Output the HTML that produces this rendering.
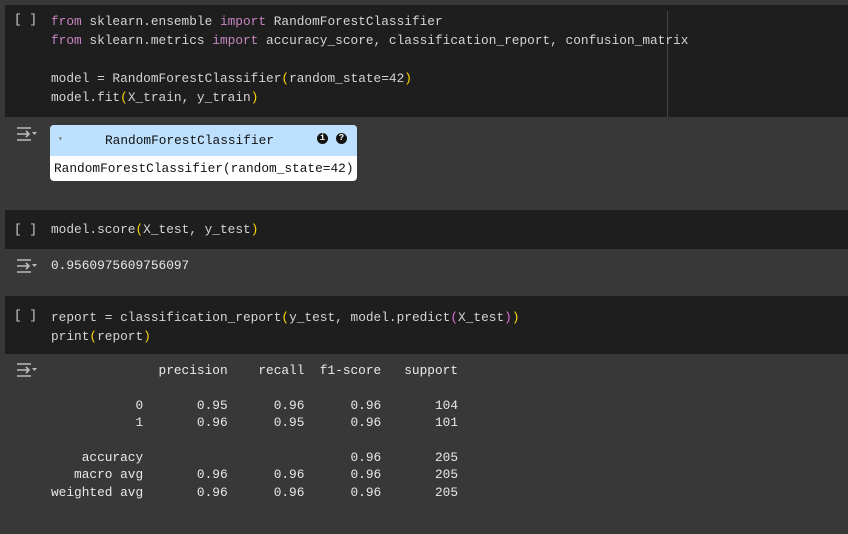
<!DOCTYPE html>
<html><head><meta charset="utf-8"><style>
body{margin:0;width:848px;height:534px;background:#383838;overflow:hidden;font-family:"Liberation Mono",monospace;font-size:12.8px;color:#d4d4d4;position:relative}
.cell{position:absolute;left:5px;right:0;background:#1e1e1e}
.br{position:absolute;left:14px;color:#cfcfcf}
pre{margin:0;font:inherit;white-space:pre;position:absolute;left:51px}
.k{color:#c586c0}.p{color:#ffd700}.q{color:#da70d6}
.ic{position:absolute;left:16px;width:22px;height:16px}
.out{color:#e8e8e8}
</style></head><body>
<div class="cell" style="top:5px;height:112px">
<div style="position:absolute;left:662px;top:6px;width:1px;height:106px;background:#444"></div>
</div>
<span class="br" style="top:12px">[ ]</span>
<pre style="top:12px;line-height:19px"><span class="k">from</span> sklearn.ensemble <span class="k">import</span> RandomForestClassifier
<span class="k">from</span> sklearn.metrics <span class="k">import</span> accuracy_score, classification_report, confusion_matrix

model = RandomForestClassifier<span class="p">(</span>random_state=42<span class="p">)</span>
model.fit<span class="p">(</span>X_train, y_train<span class="p">)</span></pre>

<svg class="ic" style="top:126px" viewBox="0 0 22 16"><g stroke="#bbb" stroke-width="1.6" fill="none"><path d="M1 2h14M1 14h14M1 8h12M10 5l3 3-3 3"/></g><path d="M16 6h5l-2.5 3z" fill="#bbb"/></svg>
<div style="position:absolute;left:50px;top:125px;width:307px;height:56px;background:#fff;border-radius:4px;overflow:hidden">
<div style="height:31px;background:#bde0fe;position:relative;color:#111">
<span style="position:absolute;left:8px;top:9px;font-size:8px;color:#777">▾</span>
<span style="position:absolute;left:55px;top:8px">RandomForestClassifier</span>
<span style="position:absolute;left:267px;top:8px;width:11px;height:11px;border-radius:50%;background:#111;color:#fff;font-size:9px;text-align:center;line-height:11px;font-weight:bold">i</span>
<span style="position:absolute;left:286px;top:8px;width:11px;height:11px;border-radius:50%;background:#111;color:#fff;font-size:9px;text-align:center;line-height:11px;font-weight:bold">?</span>
</div>
<div style="position:absolute;left:4px;top:36px;color:#111">RandomForestClassifier(random_state=42)</div>
</div>

<div class="cell" style="top:210px;height:39px"></div>
<span class="br" style="top:222px">[ ]</span>
<pre style="top:222px">model.score<span class="p">(</span>X_test, y_test<span class="p">)</span></pre>
<svg class="ic" style="top:258px" viewBox="0 0 22 16"><g stroke="#bbb" stroke-width="1.6" fill="none"><path d="M1 2h14M1 14h14M1 8h12M10 5l3 3-3 3"/></g><path d="M16 6h5l-2.5 3z" fill="#bbb"/></svg>
<pre class="out" style="top:258px">0.9560975609756097</pre>

<div class="cell" style="top:296px;height:58px"></div>
<span class="br" style="top:308px">[ ]</span>
<pre style="top:308px;line-height:19px">report = classification_report<span class="p">(</span>y_test, model.predict<span class="q">(</span>X_test<span class="q">)</span><span class="p">)</span>
print<span class="p">(</span>report<span class="p">)</span></pre>
<svg class="ic" style="top:362px" viewBox="0 0 22 16"><g stroke="#bbb" stroke-width="1.6" fill="none"><path d="M1 2h14M1 14h14M1 8h12M10 5l3 3-3 3"/></g><path d="M16 6h5l-2.5 3z" fill="#bbb"/></svg>
<pre class="out" style="top:362px;line-height:17.4px">              precision    recall  f1-score   support

           0       0.95      0.96      0.96       104
           1       0.96      0.95      0.96       101

    accuracy                           0.96       205
   macro avg       0.96      0.96      0.96       205
weighted avg       0.96      0.96      0.96       205</pre>
</body></html>
